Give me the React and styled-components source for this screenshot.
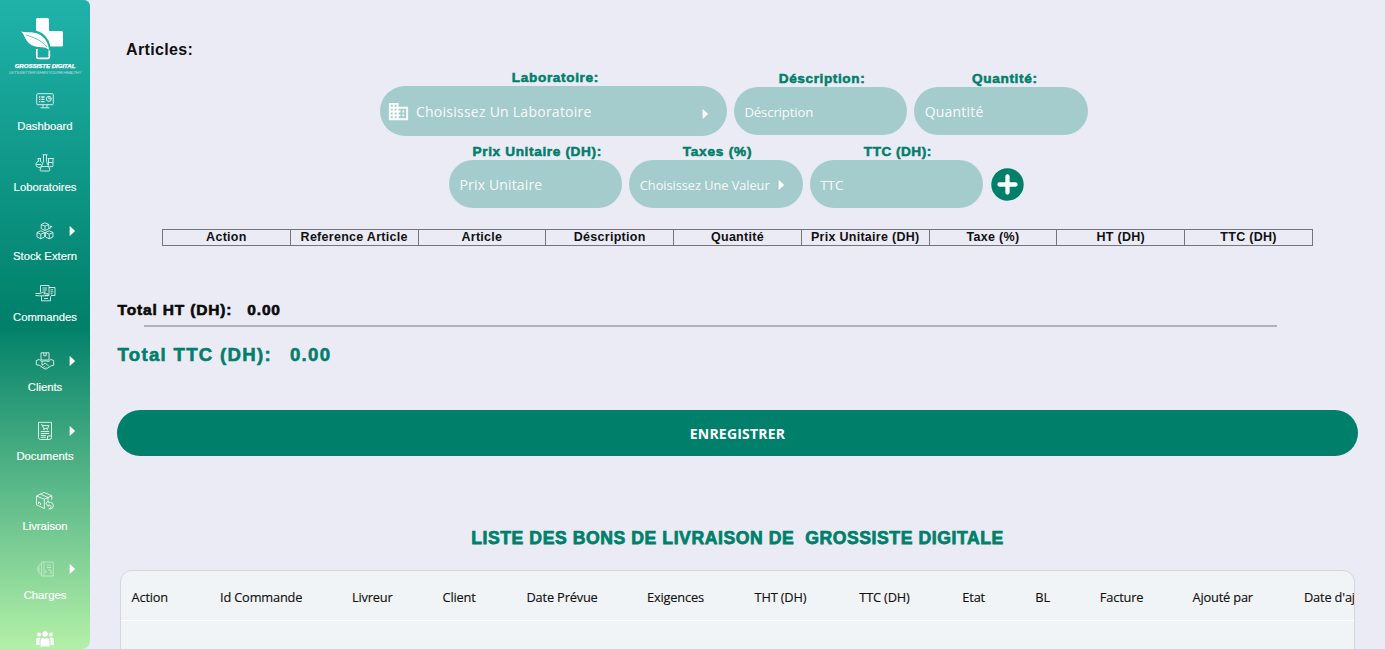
import React from "react";
import styled, { createGlobalStyle } from "styled-components";

const GREEN = "#007f6b";
const ARIAL = '"Liberation Sans", Arial, sans-serif';
const HUMANIST = '"Open Sans", "Noto Sans", sans-serif';

const GlobalStyle = createGlobalStyle`
  *, *::before, *::after { box-sizing: border-box; }
  body { margin: 0; background: #ebebf6; font-family: ${ARIAL}; overflow: hidden; }
`;

const Page = styled.div`
  display: flex;
  width: 100%;
  height: 649px;
  overflow: hidden;
  background: #ebebf6;
`;

/* ---------- sidebar ---------- */

const Sidebar = styled.nav`
  flex: none;
  width: 90px;
  height: 649px;
  overflow: hidden;
  border-radius: 0 6px 8px 0;
  background: linear-gradient(180deg, #20b2aa 0%, #008069 50%, #b4f0a8 100%);
  color: #fff;
`;

const Brand = styled.div`
  display: flex;
  flex-direction: column;
  align-items: center;
  height: 92px;
  padding-top: 17px;
  svg { display: block; margin-right: 6px; }
`;

const BrandName = styled.div`
  margin-top: 2px;
  font: italic 700 6.2px/8px ${ARIAL};
  letter-spacing: -0.08px;
  white-space: nowrap;
  -webkit-text-stroke: 0.25px #fff;
`;

const BrandTagline = styled.div`
  font: italic 400 4.4px/5px ${ARIAL};
  letter-spacing: -0.37px;
  white-space: nowrap;
  opacity: 0.6;
`;

const NavItem = styled.a`
  display: flex;
  flex-direction: column;
  align-items: center;
  height: ${(p) => p.$height}px;
  color: #fff;
`;

const NavIconRow = styled.div`
  display: grid;
  grid-template-columns: 1fr 18px 1fr;
  align-items: center;
  width: 100%;
  height: 18px;
  margin-bottom: ${(p) => p.$gap}px;
  svg { display: block; }
`;

const NavGlyph = styled.svg`
  grid-column: 2;
  width: 18px;
  height: 18px;
  overflow: visible;
  fill: none;
  stroke: #fff;
  stroke-width: 0.9;
  stroke-linejoin: round;
  opacity: ${(p) => p.$opacity || 0.9};
`;

const NavArrow = styled.svg`
  grid-column: 3;
  width: 6px;
  height: 10px;
  margin-left: 15px;
  fill: #fff;
`;

const NavLabel = styled.span`
  font: 400 11.3px/14px ${ARIAL};
  white-space: nowrap;
  -webkit-text-stroke: 0.15px #fff;
`;

/* ---------- article form ---------- */

const Main = styled.main`
  flex: 1;
  min-width: 0;
  display: flex;
  flex-direction: column;
  padding: 0 27px;
`;

const SectionTitle = styled.h2`
  margin: 40px 0 0 9px;
  font: 700 16px/20px ${ARIAL};
  letter-spacing: 0.35px;
  color: #111;
`;

const FieldRow = styled.div`
  display: flex;
  justify-content: center;
  align-items: ${(p) => p.$align || "flex-end"};
  gap: 7px;
  height: ${(p) => p.$height}px;
  margin-top: ${(p) => p.$top}px;
  padding-right: ${(p) => p.$shift}px;
`;

const Field = styled.label`
  display: flex;
  flex-direction: column;
  align-items: center;
  width: ${(p) => p.$width || 173.3}px;
`;

const FieldLabel = styled.span`
  padding-left: ${(p) => p.$indent || 3}px;
  font: 700 13.6px/16px ${ARIAL};
  letter-spacing: ${(p) => p.$spacing || 0.65}px;
  color: ${GREEN};
  -webkit-text-stroke: 0.55px ${GREEN};
  white-space: nowrap;
`;

const FieldBox = styled.div`
  display: flex;
  align-items: center;
  width: 100%;
  height: ${(p) => p.$height || 48}px;
  padding: 1px ${(p) => p.$right || 10}px 0 ${(p) => p.$left || 10.5}px;
  border-radius: 25px;
  background: #a4cccc;
  color: #fff;
`;

const Placeholder = styled.span`
  flex: 1;
  font: 400 ${(p) => p.$size}px/20px ${HUMANIST};
  letter-spacing: ${(p) => p.$spacing || 0}px;
  opacity: 0.93;
  white-space: nowrap;
`;

const Caret = styled.svg`
  flex: none;
  width: 6px;
  height: 10px;
  fill: #fff;
  margin-top: ${(p) => p.$top || 0}px;
`;

const BuildingIcon = styled.svg`
  flex: none;
  width: 23px;
  height: 23px;
  margin: -1px 6px 0 0;
  fill: #fff;
`;

const AddButton = styled.button`
  width: 33px;
  height: 33px;
  margin: 0 0 7.5px 1px;
  padding: 0;
  border: 0;
  background: none;
  svg { display: block; }
`;

const ArticleTable = styled.table`
  width: 1151px;
  height: 17px;
  margin: 21px 0 0 45px;
  border-collapse: collapse;
  table-layout: fixed;
`;

const ArticleHead = styled.th`
  height: 16px;
  padding: 0 0 1px;
  border: 1px solid #74747c;
  font: 700 12.5px/13px ${ARIAL};
  letter-spacing: 0.28px;
  color: #111;
  white-space: nowrap;
`;

const Totals = styled.section`
  display: flex;
  flex-direction: column;
`;

const TotalLine = styled.div`
  display: flex;
  gap: ${(p) => p.$gap}px;
  margin-top: ${(p) => p.$top}px;
  padding-left: 0.5px;
  font: 700 ${(p) => p.$size}px/20px ${ARIAL};
  letter-spacing: ${(p) => p.$spacing}px;
  color: ${(p) => p.$color};
  -webkit-text-stroke: 0.6px ${(p) => p.$color};
`;

const Rule = styled.hr`
  width: 1133px;
  height: 2px;
  margin: 5px 0 0 27px;
  border: 0;
  background: #b2b2bd;
`;

const SaveButton = styled.button`
  flex: none;
  height: 46px;
  margin-top: 45px;
  padding-top: 2px;
  border: 0;
  border-radius: 23px;
  background: ${GREEN};
  color: #fff;
  font: 700 14px/20px ${HUMANIST};
  letter-spacing: 0.2px;
`;

/* ---------- delivery list ---------- */

const ListTitle = styled.h1`
  margin: 72px 0 0;
  font: 700 17.6px/20px ${ARIAL};
  letter-spacing: 0.57px;
  text-align: center;
  white-space: pre;
  color: ${GREEN};
  -webkit-text-stroke: 0.75px ${GREEN};
`;

const ListCard = styled.section`
  flex: none;
  height: 110px;
  margin: 22px 3px 0 3px;
  overflow: hidden;
  border: 1px solid #d6d6dc;
  border-radius: 12px;
  background: #f1f4f6;
`;

const ListHeader = styled.div`
  display: flex;
  align-items: center;
  height: 50px;
  padding: 2px 0 0 10.5px;
  border-bottom: 1px solid #fff;
`;

const ListColumn = styled.span`
  flex: none;
  width: ${(p) => p.$width}px;
  font: 400 12.8px/20px ${HUMANIST};
  letter-spacing: -0.17px;
  color: #111;
  -webkit-text-stroke: 0.15px #111;
  white-space: nowrap;
`;

/* ---------- drawings ---------- */

const Triangle = "M0.6 0.8 Q0.6 0 1.3 0.6 L5.6 4.4 Q6.1 5 5.6 5.6 L1.3 9.4 Q0.6 10 0.6 9.2Z";

const glyphs = {
  dashboard: (
    <>
      <rect x="0.7" y="1.7" width="16.6" height="11" rx="1" />
      <path strokeWidth="1.3" d="M3 5h1.3M5.3 5h3.2M3 7.3h1.3M5.3 7.3h3.2M3 9.6h1.3M5.3 9.6h3.2" />
      <path d="M7 12.7v2.6M11 12.7v2.6M4.5 15.8h9" />
      <circle cx="12.8" cy="6.8" r="2.5" />
      <path d="M12.8 4.3v2.5h2.5" />
    </>
  ),
  lab: (
    <>
      <path d="M6.5.8h5M7.5.8v6.5L4.2 15.5q-.4 1.5 1 1.5h7.6q1.4 0 1-1.5L10.5 7.3V.8M5.6 12.5h6.8" />
      <path d="M1.5 4.5H5M2.3 4.5v3A3 3 0 1 0 5.2 12.4M4.4 4.5v3l1.3.8M.4 10.5h4.9" />
      <path d="M11.8 4.5h6M12.5 4.5v6.3M17 4.5v7.2q0 1-1 1h-2.6M12.5 8.5H17" />
    </>
  ),
  stock: (
    <>
      <path d="M9 .8l3.8 1.7v4.2L9 8.5 5.2 6.7V2.5zM5.2 2.5L9 4.2l3.8-1.7M9 4.2v4.3" />
      <path d="M4.8 8.8l3.8 1.7v4.4l-3.8 1.9L1 14.9v-4.4zM1 10.5l3.8 1.8 3.8-1.8M4.8 12.3v4.5" />
      <path d="M13.2 8.8l3.8 1.7v4.4l-3.8 1.9-3.8-1.9v-4.4zM9.4 10.5l3.8 1.8 3.8-1.8M13.2 12.3v4.5M12.8 6.7q2.7-.2 2.2-2.7l-1.2 1M15 4l1.3 1" />
    </>
  ),
  orders: (
    <>
      <path d="M4.5 8.5v-7H13v10H9M6.5 4H11M6.5 6H11" />
      <path d="M13 3.5h6v8h-4M14.5 5.8H17M14.5 7.8h3M14.5 9.8h2" />
      <path d="M-.5 9.5h5L7 8h2.5L7.7 9.8H12v2H3.5l-4-.3M5.5 12v4.8h9v-4.5M8 14.5h4" />
    </>
  ),
  clients: (
    <>
      <path d="M5 .8h8V8H5zM7.8.8v3h2.4v-3" />
      <path d="M.3 8.6l2.9-1.2 2.2 2.2L9 8.8l3.8.8 2-2.2 2.9 1.2v4.6l-2.5.6-4.6 3q-1.4.5-2.6-.3l-4.8-3.3-2.9-.4z" />
      <path d="M6.3 10.2l-.7 2 1.8.2L9 11l3.8 3M5.5 14.2l1.4-1.3M7.3 15.5l1.4-1.4M9.2 16.4l1.2-1.2" />
    </>
  ),
  documents: (
    <>
      <path d="M2.5.3h13v15.2q0 2-2 2h-9q-2 0-2-2z" />
      <path d="M5 2.8h1.3l1.2 3.6h4.3l1-2.8H6.6M4.8 9.5h8.4M4.8 11.5h8.4M4.8 13.5h5M4.8 15.3h5M11.5 17v-3h4" />
      <circle cx="8" cy="7.5" r=".4" />
      <circle cx="11.3" cy="7.5" r=".4" />
    </>
  ),
  delivery: (
    <>
      <path d="M8 .3l7.8 3.5v4M15.8 3.8L8.3 7.2.5 4 8 .3M.5 4v8.8l7.8 3.8V7.2M4.5 2.2L12 5.5v3M2.5 12v-2l2 1v2" />
      <path d="M9.8 11.2L12.3 9v1.4h2.2q2.9.3 2.9 3.1T15 16.9h-2.3q2.5-.7 2.4-2.5-.2-1.4-2.8-1.3v1.3z" />
    </>
  ),
  charges: (
    <>
      <path d="M5.5 2h11.7v14H5.5zM8 2v14M10.5 5H15M10.5 7.5H15M12 10h3v4M10 10v3" />
      <path d="M5.3 3.5a6 6 0 0 0 0 11M3 6.5v5" />
    </>
  ),
};

const navItems = [
  { label: "Dashboard", icon: "dashboard", height: 62, gap: 9 },
  { label: "Loboratoires", icon: "lab", height: 68, gap: 8 },
  { label: "Stock Extern", icon: "stock", height: 62, gap: 9, sub: true },
  { label: "Commandes", icon: "orders", height: 68, gap: 8 },
  { label: "Clients", icon: "clients", height: 70, gap: 10, sub: true },
  { label: "Documents", icon: "documents", height: 70, gap: 9, sub: true },
  { label: "Livraison", icon: "delivery", height: 68, gap: 9 },
  { label: "Charges", icon: "charges", height: 69, gap: 10, sub: true, opacity: 0.5 },
];

const articleColumns = [
  "Action", "Reference Article", "Article", "Déscription", "Quantité",
  "Prix Unitaire (DH)", "Taxe (%)", "HT (DH)", "TTC (DH)",
];

const listColumns = [
  ["Action", 88.5], ["Id Commande", 132], ["Livreur", 90.5], ["Client", 84],
  ["Date Prévue", 120.5], ["Exigences", 107.5], ["THT (DH)", 104.8], ["TTC (DH)", 103],
  ["Etat", 73], ["BL", 64.5], ["Facture", 92.7], ["Ajouté par", 111.5], ["Date d'ajout", 90],
];

function Logo() {
  return (
    <svg width="44" height="43" viewBox="0 0 44 43" fill="none">
      <path d="M16 13.5v-11Q16 1 17.5 1h10Q29 1 29 2.500V14h12.500Q43 14 43 15.500V28q0 1.500-1.500 1.500h-11Q28 17 16 13.500z" fill="#fff" />
      <path d="M1 14.5c5 1.500 10-.5 16.500 2C24.500 19.500 28.500 25.500 29 33c-3-3-7-2.500-11-3-5-.7-9-2.500-11.500-6.500C4.500 20.500 4 17 1 14.500z" fill="#fff" />
      <path d="M6 18c8 2.5 15 5 21 12" stroke="#1fa79f" strokeWidth="0.7" />
      <path d="M16.8 32v8q0 1.3 1.3 1.3H28q1.3 0 1.3-1.3v-6.5" stroke="#fff" strokeWidth="1.7" />
    </svg>
  );
}

function SideNav() {
  return (
    <Sidebar>
      <Brand>
        <Logo />
        <BrandName>GROSSISTE DIGITAL</BrandName>
        <BrandTagline>LET'S BETTER WHEN YOU'RE HEALTHY</BrandTagline>
      </Brand>
      {navItems.map((item) => (
        <NavItem key={item.label} $height={item.height}>
          <NavIconRow $gap={item.gap}>
            <NavGlyph viewBox="0 0 18 18" $opacity={item.opacity}>{glyphs[item.icon]}</NavGlyph>
            {item.sub && <NavArrow viewBox="0 0 6 10"><path d={Triangle} /></NavArrow>}
          </NavIconRow>
          <NavLabel>{item.label}</NavLabel>
        </NavItem>
      ))}
      <NavItem $height={20}>
        <svg width="18" height="18" viewBox="0 0 18 18" fill="#fff">
          <circle cx="9" cy="5" r="2.8" />
          <circle cx="3" cy="5.5" r="1.9" />
          <circle cx="15" cy="5.5" r="1.9" />
          <path d="M4.5 17.5v-5Q4.500 9 7.500 9L9 10.300 10.500 9q3 0 3 3.500v5zM0 16v-4.500q0-3 2.500-3 1.300 0 2 .7-1 1.300-1 3.300V16zM18 16v-4.500q0-3-2.500-3-1.300 0-2 .7 1 1.300 1 3.300V16z" />
        </svg>
      </NavItem>
    </Sidebar>
  );
}

function TextField({ label, text, size = 14, spacing, labelSpacing, labelIndent, caret }) {
  return (
    <Field>
      <FieldLabel $spacing={labelSpacing} $indent={labelIndent}>{label}</FieldLabel>
      <FieldBox $right={caret ? 18.5 : 10}>
        <Placeholder $size={size} $spacing={spacing}>{text}</Placeholder>
        {caret && <Caret viewBox="0 0 6 10" $top={1}><path d={Triangle} /></Caret>}
      </FieldBox>
    </Field>
  );
}

export default function App() {
  return (
    <>
      <GlobalStyle />
      <Page>
        <SideNav />
        <Main>
          <SectionTitle>Articles:</SectionTitle>
          <FieldRow $height={66} $top={10} $shift={7.6} $align="center">
            <Field $width={347}>
              <FieldLabel $indent={4}>Laboratoire:</FieldLabel>
              <FieldBox $height={50} $left={7} $right={18.5}>
                <BuildingIcon viewBox="0 0 24 24">
                  <path d="M12 7V3H2v18h20V7H12zM6 19H4v-2h2v2zm0-4H4v-2h2v2zm0-4H4V9h2v2zm0-4H4V5h2v2zm4 12H8v-2h2v2zm0-4H8v-2h2v2zm0-4H8V9h2v2zm0-4H8V5h2v2zm10 12h-8v-2h2v-2h-2v-2h2v-2h-2V9h8v10zm-2-8h-2v2h2v-2zm0 4h-2v2h2v-2z" />
                </BuildingIcon>
                <Placeholder $size={14} $spacing={0.25}>Choisissez Un Laboratoire</Placeholder>
                <Caret viewBox="0 0 6 10" $top={4}><path d={Triangle} /></Caret>
              </FieldBox>
            </Field>
            <TextField label="Déscription:" labelSpacing={0.6} text="Déscription" size={13.2} spacing={-0.15} />
            <TextField label="Quantité:" labelIndent={8} text="Quantité" spacing={0.2} />
          </FieldRow>
          <FieldRow $height={64} $top={8} $shift={2}>
            <TextField label="Prix Unitaire (DH):" labelSpacing={0.65} labelIndent={3} text="Prix Unitaire" spacing={0.15} />
            <TextField label="Taxes (%)" labelSpacing={0.8} text="Choisissez Une Valeur" size={12.8} spacing={-0.05} caret />
            <TextField label="TTC (DH):" labelSpacing={0.5} labelIndent={3} text="TTC" size={13.5} />
            <AddButton aria-label="Ajouter">
              <svg width="33" height="33" viewBox="0 0 33 33">
                <circle cx="16.5" cy="16.5" r="16.2" fill={GREEN} />
                <path d="M16.5 8.5v16M8.5 16.5h16" stroke="#fff" strokeWidth="4.3" strokeLinecap="round" />
              </svg>
            </AddButton>
          </FieldRow>
          <ArticleTable>
            <thead>
              <tr>{articleColumns.map((name) => <ArticleHead key={name}>{name}</ArticleHead>)}</tr>
            </thead>
          </ArticleTable>
          <Totals>
            <TotalLine $top={54} $size={15.5} $spacing={0.84} $gap={15} $color="#0a0a0a">
              <span>Total HT (DH):</span><span>0.00</span>
            </TotalLine>
            <Rule />
            <TotalLine $top={18} $size={18.6} $spacing={1.3} $gap={18} $color={GREEN}>
              <span>Total TTC (DH):</span><span>0.00</span>
            </TotalLine>
          </Totals>
          <SaveButton>ENREGISTRER</SaveButton>
          <ListTitle>{"LISTE DES BONS DE LIVRAISON DE  GROSSISTE DIGITALE"}</ListTitle>
          <ListCard>
            <ListHeader>
              {listColumns.map(([name, width]) => (
                <ListColumn key={name} $width={width}>{name}</ListColumn>
              ))}
            </ListHeader>
          </ListCard>
        </Main>
      </Page>
    </>
  );
}
